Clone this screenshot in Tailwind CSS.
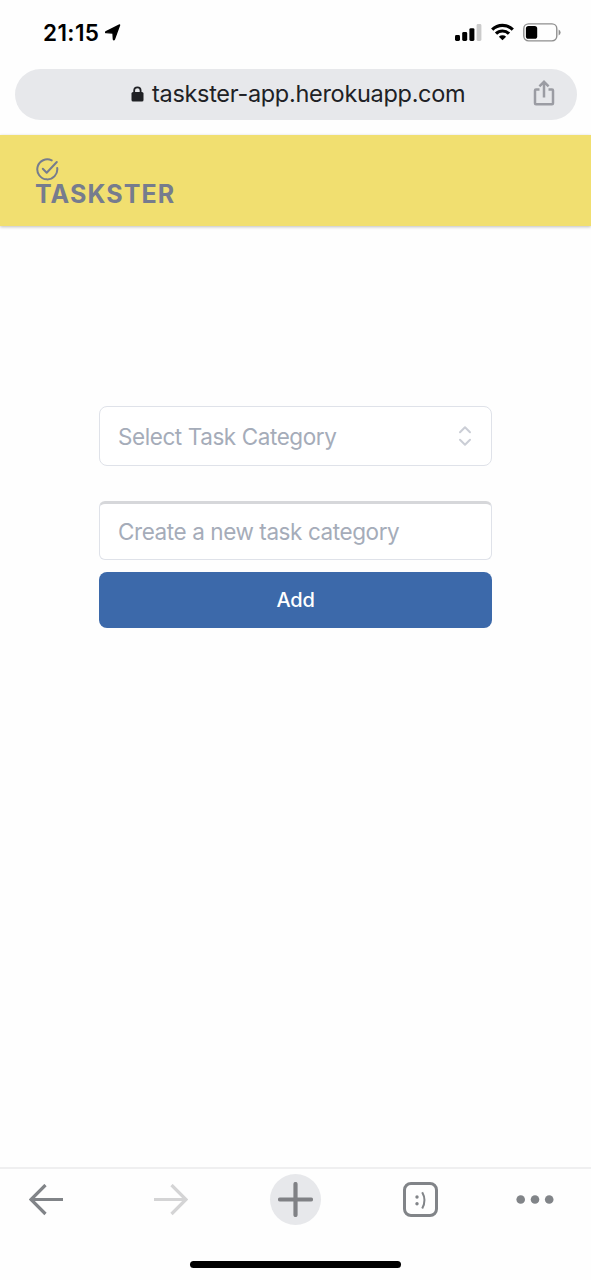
<!DOCTYPE html>
<html lang="en">
<head>
<meta charset="utf-8">
<title>Taskster</title>
<script src="https://cdn.jsdelivr.net/npm/@tailwindcss/browser@4"></script>
</head>
<body class="bg-white">
<div class="flex h-[1280px] w-[591px] flex-col overflow-hidden bg-[#fefefe] font-['Inter',sans-serif]">
  <!-- Status bar -->
  <div class="flex h-[69px] shrink-0 items-start justify-between pl-[43px] pr-[30px] pt-[20px]">
    <div class="flex items-start gap-[6px]">
      <span class="w-[56px] whitespace-nowrap text-[22.5px] font-semibold leading-[26px] tracking-[0.4px] text-black">21:15</span>
      <svg class="mt-[4px]" width="16" height="17" viewBox="0 0 16 17"><path d="M14.600 1 9.400 15.200q-.600 1.200-1 0L8 9 1.200 8.600q-1.200-.300 0-1z" fill="#000" stroke="#000" stroke-width="1.400" stroke-linejoin="round"/></svg>
    </div>
    <div class="flex items-start">
      <svg class="mt-[4px]" width="27" height="17" viewBox="0 0 27 17"><g fill="#000"><rect x="0" y="11" width="5" height="6" rx="1.4"/><rect x="7.2" y="8" width="5" height="9" rx="1.4"/><rect x="14.4" y="4.2" width="5" height="12.8" rx="1.4"/></g><rect x="21.6" y="0" width="4.8" height="17" rx="1.4" fill="#cbcbcb"/></svg>
      <svg class="ml-[9px] mt-[3px]" width="23" height="18" viewBox="0 0 23 18"><g fill="none" stroke="#000" stroke-width="3.2"><path d="M1.2 6.6a14.7 14.7 0 0 1 20.6 0"/><path d="M5 10.7a9.2 9.2 0 0 1 13 0"/></g><path d="M11.5 17.3 7.9 13.7a5.2 5.2 0 0 1 7.2 0z" fill="#000"/></svg>
      <svg class="ml-[9px] mt-[3px]" width="38" height="19" viewBox="0 0 38 19"><rect x=".8" y=".9" width="33" height="17" rx="4.8" fill="none" stroke="#8e8e8e" stroke-width="1.4"/><rect x="2.9" y="3" width="11.3" height="12.8" rx="2.6" fill="#000"/><path d="M35.6 6.5v6q2-1 2-3t-2-3z" fill="#8e8e8e"/></svg>
    </div>
  </div>
  <!-- Address bar -->
  <div class="h-[66px] shrink-0 px-[14.5px]">
    <div class="flex h-[51px] items-center rounded-full bg-[#e7e8eb] pl-[116.5px] pr-[22px] text-[#202125]">
      <svg class="-mt-[2px]" width="13" height="16" viewBox="0 0 13 16"><path d="M3.2 8V4.5a3.2 3.2 0 0 1 6.4 0V8" fill="none" stroke="#202125" stroke-width="1.8"/><rect x=".5" y="6" width="12" height="9.5" rx="1.6" fill="#202125"/></svg>
      <span class="-mt-[2px] ml-[8px] grow whitespace-nowrap text-[23.5px] leading-[30px] tracking-[-0.3px]">taskster-app.herokuapp.com</span>
      <svg class="-mt-[4px]" width="22" height="26" viewBox="0 0 22 26"><g fill="none" stroke="#9b9ca3" stroke-width="2.5"><path d="M6.5 9.4H3q-1 0-1 1v12.8q0 1 1 1h16q1 0 1-1V10.4q0-1-1-1h-3.500"/><path d="M11 17.5V2.2M6.4 6.4 11 1.8l4.6 4.6"/></g></svg>
    </div>
  </div>
  <!-- App header -->
  <header class="flex h-[91px] shrink-0 flex-col bg-[#f1df70] pl-[36px] pt-[23px] shadow-[0_1px_3px_rgba(0,0,0,0.25)]">
    <svg width="23" height="23" viewBox="0 0 23 23"><g fill="none" stroke="#767c8e" stroke-width="2" stroke-linecap="round" stroke-linejoin="round"><path d="M15.7 2.4A10 10 0 1 0 21.2 10"/><path d="m6.8 10.8 3.9 4L20.8 4"/></g></svg>
    <span class="-ml-px whitespace-nowrap text-[25px] font-bold leading-[26px] tracking-[1.1px] text-[#767c8e]">TASKSTER</span>
  </header>
  <!-- Task form -->
  <main class="flex grow flex-col px-[99px] pt-[180px]">
    <div class="flex h-[60px] items-center justify-between rounded-[8px] border border-[#dfe2e9] bg-white pl-[18px] pr-[19px]">
      <span class="mt-[2px] whitespace-nowrap text-[22.5px] leading-[30px] tracking-[-0.42px] text-[#a5acb9]">Select Task Category</span>
      <svg width="14" height="22" viewBox="0 0 14 22"><path d="m2 7.3 5-5 5 5M2 14.7l5 5 5-5" fill="none" stroke="#cbced6" stroke-width="2" stroke-linecap="round" stroke-linejoin="round"/></svg>
    </div>
    <div class="mt-[35px] flex h-[59px] items-center rounded-[6px] border border-t-[3px] border-[#dfe2e9] border-t-[#d6d7da] bg-white pl-[18px]">
      <span class="whitespace-nowrap text-[22.5px] leading-[30px] tracking-[-0.42px] text-[#a5acb9]">Create a new task category</span>
    </div>
    <button class="mt-[12px] h-[56px] rounded-[8px] bg-[#3c69aa] text-[20px] font-medium leading-[54px] tracking-[-0.2px] text-white">Add</button>
  </main>
  <!-- Browser toolbar -->
  <nav class="flex h-[113px] shrink-0 flex-col border-t-2 border-[#efeff0]">
    <div class="mt-[5px] flex h-[51px] items-center pl-[29px]">
      <svg width="35" height="32" viewBox="0 0 35 32"><path d="M34 15.500H2.5M16.5 1 2 15.500l14.500 14.500" fill="none" stroke="#818488" stroke-width="3.2"/></svg>
      <svg class="ml-[89px]" width="35" height="32" viewBox="0 0 35 32"><path d="M1 15.500h31.500M18.500 1 33 15.500 18.500 30" fill="none" stroke="#d4d4d5" stroke-width="3.2"/></svg>
      <div class="ml-[82px] flex size-[51px] items-center justify-center rounded-full bg-[#e7e8eb]">
        <svg width="35" height="35" viewBox="0 0 35 35"><path d="M17.500 2v31M2 17.500h31" fill="none" stroke="#808185" stroke-width="4.200" stroke-linecap="round"/></svg>
      </div>
      <div class="ml-[82px] flex h-[35px] w-[35px] items-center justify-center rounded-[8px] border-[3px] border-[#818488]">
        <svg width="14" height="20" viewBox="0 0 14 20"><g fill="#818488"><circle cx="3" cy="7" r="1.700"/><circle cx="3" cy="13.700" r="1.700"/></g><path d="M8.200 2.200q4.600 8.100 0 16.200" fill="none" stroke="#818488" stroke-width="2"/></svg>
      </div>
      <svg class="ml-[78px]" width="38" height="9" viewBox="0 0 38 9"><g fill="#818488"><circle cx="4.700" cy="4.500" r="4.300"/><circle cx="19" cy="4.500" r="4.300"/><circle cx="33.200" cy="4.500" r="4.300"/></g></svg>
    </div>
    <div class="ml-[190px] mt-[36px] h-[7px] w-[211px] rounded-full bg-black"></div>
  </nav>
</div>
</body>
</html>
